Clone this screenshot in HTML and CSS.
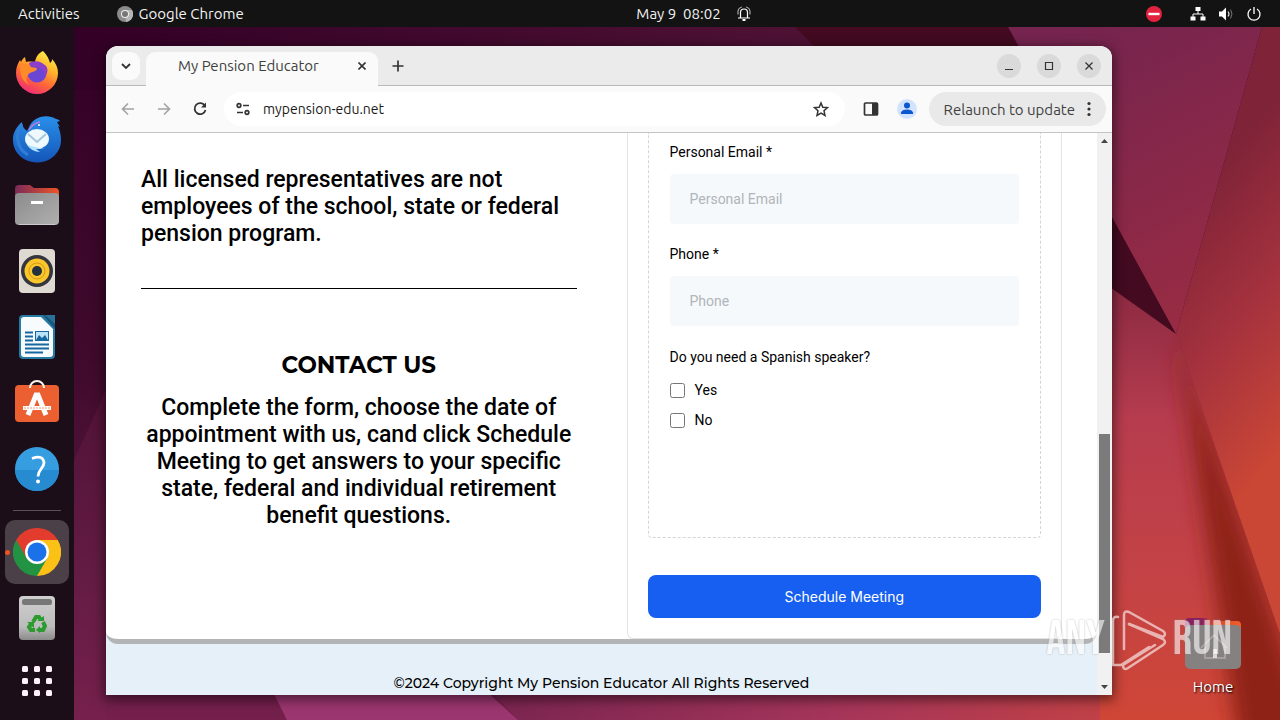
FILE: index.html
```html
<!DOCTYPE html>
<html lang="en">
<head>
<meta charset="utf-8">
<title>My Pension Educator</title>
<link rel="stylesheet" href="styles.css">
</head>
<body>
<div class="desktop">
  <svg class="wallpaper" viewBox="0 0 1280 720" preserveAspectRatio="none" aria-hidden="true">
    <defs>
      <linearGradient id="base" x1="0" y1="0" x2="0" y2="1"><stop offset="0" stop-color="#330026"/><stop offset=".5" stop-color="#3f0a2c"/><stop offset=".8" stop-color="#5c1a40"/><stop offset="1" stop-color="#75204c"/></linearGradient>
      <linearGradient id="top" x1="0" y1="0" x2="1" y2="0"><stop offset="0" stop-color="#330026"/><stop offset="1" stop-color="#4f1235"/></linearGradient>
      <linearGradient id="upper" gradientUnits="userSpaceOnUse" x1="1080" y1="27" x2="1240" y2="330"><stop offset="0" stop-color="#75244f"/><stop offset="1" stop-color="#9c2c42"/></linearGradient>
      <linearGradient id="right" gradientUnits="userSpaceOnUse" x1="1150" y1="240" x2="1330" y2="400"><stop offset="0" stop-color="#7f2338"/><stop offset=".5" stop-color="#a5323e"/><stop offset="1" stop-color="#cb4735"/></linearGradient>
      <linearGradient id="lower" gradientUnits="userSpaceOnUse" x1="1112" y1="290" x2="1112" y2="720"><stop offset="0" stop-color="#8c2a42"/><stop offset=".3" stop-color="#b63c4e"/><stop offset=".7" stop-color="#c54344"/><stop offset="1" stop-color="#cf4636"/></linearGradient>
      <linearGradient id="foot" gradientUnits="userSpaceOnUse" x1="490" y1="0" x2="1180" y2="0"><stop offset="0" stop-color="#7a2550"/><stop offset=".5" stop-color="#a5355a"/><stop offset="1" stop-color="#c84440"/></linearGradient>
      <filter id="soft" x="-50%" y="-20%" width="200%" height="140%"><feGaussianBlur stdDeviation="10"/></filter>
    </defs>
    <rect width="1280" height="720" fill="url(#base)"/>
    <path d="M74 27H820V90H74Z" fill="url(#top)"/>
    <path d="M74 460L106 390V720H74Z" fill="#7a2450" opacity=".25"/>
    <path d="M490 690L1100 278L1176 334L1290 664V720H518Z" fill="url(#foot)"/>
    <path d="M1100 278L1176 334L1290 664V720H1100Z" fill="url(#lower)"/>
    <path d="M1176 334L1310 720L1290 750H1240Z" fill="#8e2219" filter="url(#soft)"/>
    <path d="M795 27H1008L1176 334L1100 280L840 72Z" fill="#430a20"/>
    <path d="M1008 27H1262L1176 334Z" fill="url(#upper)"/>
    <path d="M1262 27H1280V634L1176 334Z" fill="url(#right)"/>
    <path d="M272 690H485L518 720H287Z" fill="#9c3670"/>
  </svg>

  <header class="topbar">
    <div class="topbar-left">
      <button class="bar-button">Activities</button>
      <button class="bar-button">
        <svg width="16" height="16" viewBox="0 0 16 16"><circle cx="8" cy="8" r="8" fill="#8b8b8b"/><path d="M8 4h7A8 8 0 0 1 9 16z" fill="#b5b5b5"/><circle cx="8" cy="8" r="4" fill="#eee"/><circle cx="8" cy="8" r="3" fill="#777"/></svg>
        Google Chrome
      </button>
    </div>
    <button class="bar-button clock">May 9&nbsp; 08:02
      <svg width="16" height="16" viewBox="0 0 16 16" fill="none" stroke="#fff" stroke-width="1.200"><path d="M4.500 12V6.500a3.500 3.500 0 0 1 7 0V12M2 12h12"/><path d="M2 8.500V5.500A5 5 0 0 1 6 1M14 8.500V5.500A5 5 0 0 0 10 1" stroke="#aaa"/><path d="M6.500 14h3" stroke-width="2"/></svg>
    </button>
    <div class="tray">
      <svg width="16" height="16" viewBox="0 0 16 16"><circle cx="8" cy="8" r="8" fill="#e2233f"/><path d="M2.500 8h11" stroke="#fff" stroke-width="2.400"/></svg>
      <svg class="tray-network" width="16" height="16" viewBox="0 0 16 16" fill="#fff"><path d="M5.500 1h5v4h-5zM.5 10.500h5v4h-5zM10.500 10.500h5v4h-5z"/><path d="M8 5v3M3 11V8h10v3" fill="none" stroke="#fff"/></svg>
      <svg width="16" height="16" viewBox="0 0 16 16"><path d="M1 5.500h3L8 1.500v13l-4-4H1z" fill="#fff"/><path d="M10 5.500q2 2.500 0 5" fill="none" stroke="#ddd" stroke-width="1.200"/><path d="M12.500 3.500q3 4.500 0 9" fill="none" stroke="#777"/></svg>
      <svg width="16" height="16" viewBox="0 0 16 16" fill="none" stroke="#fff" stroke-width="1.300"><path d="M5 3a6 6 0 1 0 6 0M8 1v7"/></svg>
    </div>
  </header>

  <nav class="dock" aria-label="Dock">
    <button class="dock-item" aria-label="Firefox"><svg width="48" height="48" viewBox="0 0 48 48">
      <defs><linearGradient id="ff" x1=".8" y1="0" x2=".3" y2="1"><stop offset="0" stop-color="#fff44f"/><stop offset=".35" stop-color="#ffb52a"/><stop offset=".65" stop-color="#ff6a35"/><stop offset="1" stop-color="#ef2a78"/></linearGradient></defs>
      <path d="M30 2c4 4 6 8 7 12 2-1 2-3 2-4 4 4 6 9 6 14a21 21 0 0 1-42 0c0-6 2-10 4-13l1 2c1-2 2-4 4-5l1 5c4-1 7 0 9 0 1-6 4-9 8-11z" fill="url(#ff)"/>
      <circle cx="24" cy="24" r="9.500" fill="#6b45d4"/><path d="M16 14c6-3 12-2 17 3 3 4 1 9-2 11 1-6-3-10-9-10-3 0-6-1-6-4z" fill="#8c3fc8"/><path d="M8 15c5-1 8 1 10 3 3 1 6 0 6 2-2 4-7 2-9 6-3 4-1 8 2 10C9 33 6 25 8 15z" fill="#ff8b28"/>
    </svg></button>
    <button class="dock-item" aria-label="Thunderbird"><svg width="48" height="48" viewBox="0 0 48 48">
      <defs><linearGradient id="tb" x1="0" y1="0" x2="0" y2="1"><stop offset="0" stop-color="#2a8fea"/><stop offset="1" stop-color="#1456b8"/></linearGradient></defs>
      <path d="M17 10C22 1 35-1 43 4c2 0 3 1 4 2l-3 1 3 5-2-1c2 5 3 9 3 14a24 22 0 0 1-48 1C-1 20 3 12 9 7c0 3 1 6 5 9z" fill="url(#tb)"/><path d="M9 9C2 18 3 33 15 40" fill="none" stroke="#2f7fd6" stroke-width="3"/><ellipse cx="24" cy="24" rx="12" ry="10" fill="#edf8ff"/><path d="M15 19l9 8 9-8" fill="none" stroke="#a7c6d5" stroke-width="2"/><path d="M14 30q5 7 13 7l-4-3h8z" fill="#b5e3ff"/><path d="M16 15q4-7 11-8" fill="none" stroke="#bd7be0" stroke-width="1.500"/><circle cx="26" cy="10" r="1" fill="#fff"/>
    </svg></button>
    <button class="dock-item" aria-label="Files"><svg width="48" height="48" viewBox="0 0 48 48">
      <defs><linearGradient id="tabg"><stop offset="0" stop-color="#7a2a58"/><stop offset="1" stop-color="#ee5526"/></linearGradient><linearGradient id="fold1" x1="0" y1="0" x2="1" y2="1"><stop offset="0" stop-color="#8b8b8b"/><stop offset="1" stop-color="#b0b0b0"/></linearGradient></defs>
      <path d="M2 8q0-4 4-4h11l4 3h21q4 0 4 4v12H2z" fill="url(#tabg)"/><rect x="2" y="12" width="44" height="32" rx="4" fill="url(#fold1)"/><path d="M6 43.500h36" stroke="#ccc"/><rect x="18" y="20" width="12" height="3" fill="#fff"/>
    </svg></button>
    <button class="dock-item" aria-label="Rhythmbox"><svg width="48" height="48" viewBox="0 0 48 48"><rect x="6" y="2" width="36" height="44" rx="4" fill="#dedad1"/><circle cx="24" cy="24" r="16" fill="#35353d"/><circle cx="24" cy="24" r="12.500" fill="#f9c62b"/><circle cx="24" cy="24" r="8" fill="none" stroke="#d59a16"/><circle cx="24" cy="24" r="5" fill="#23303d"/></svg></button>
    <button class="dock-item" aria-label="Writer"><svg width="48" height="48" viewBox="0 0 48 48"><path d="M10 2h32v40q0 4-4 4H10q-4 0-4-4V6q0-4 4-4z" fill="#267ba5"/><path d="M30 2h12v14z" fill="#1b557a"/><path d="M32 2h10v9z" fill="#2a7199"/><path d="M11 4h17l12 12v25q0 3-3 3H11q-3 0-3-3V7q0-3 3-3z" fill="#f7fbfd"/><path d="M12 19.500h8M12 23.500h8M12 27.500h8M12 31.500h24M12 35.500h24M12 39.500h18" stroke="#1668a0" stroke-width="2"/><rect x="22.500" y="18.500" width="13" height="9" fill="#b9e2f8" stroke="#1668a0"/><path d="M23 27l3-5 3 3 3-3 3 5z" fill="#1668a0"/></svg></button>
    <button class="dock-item" aria-label="Software"><svg width="48" height="48" viewBox="0 0 48 48"><rect x="2" y="6" width="44" height="37" rx="4" fill="#ec5f31"/><path d="M17 9a7 7 0 0 1 14 0" fill="none" stroke="#fff5ea" stroke-width="2"/><path d="M15 36l8-20h2l8 20" fill="none" stroke="#fff" stroke-width="5"/><path d="M10 29h28" stroke="#fff" stroke-width="4"/><path d="M11 29h26" stroke="#ef9b77" stroke-dasharray="2 1"/></svg></button>
    <button class="dock-item" aria-label="Help"><svg width="48" height="48" viewBox="0 0 48 48"><circle cx="24" cy="24" r="22" fill="#379de1"/><path d="M2 25h44a22 21 0 0 1-44 0z" fill="#268bd0"/><path d="M19 13.500q11-4 12 4c0 6-6 7-6 14" fill="none" stroke="#fff" stroke-width="2.800"/><circle cx="25" cy="36.500" r="2" fill="#fff"/></svg></button>
    <hr class="dock-divider">
    <button class="dock-item dock-active" aria-label="Google Chrome"><svg width="48" height="48" viewBox="0 0 48 48"><path d="M24 24L3.200 12A24 24 0 0 1 44.800 12z" fill="#e33b2e"/><path d="M24 24L44.800 12A24 24 0 0 1 24 48z" fill="#fbc116"/><path d="M24 24L3.200 12A24 24 0 0 0 24 48z" fill="#229342"/><path d="M24 12h20.800L33.500 30z" fill="#fbc116"/><path d="M34.400 30L24 48l-9-18z" fill="#229342"/><path d="M3.200 12L13.600 30 24 12z" fill="#e33b2e"/><circle cx="24" cy="24" r="12" fill="#fff"/><circle cx="24" cy="24" r="9.500" fill="#1b71e8"/></svg></button>
    <button class="dock-item" aria-label="Trash"><svg width="48" height="48" viewBox="0 0 48 48"><defs><linearGradient id="bin" x1="0" y1="0" x2="0" y2="1"><stop offset="0" stop-color="#cfcfcf"/><stop offset=".7" stop-color="#bcbcbc"/><stop offset="1" stop-color="#8a8a8a"/></linearGradient></defs><rect x="6" y="2" width="36" height="44" rx="4" fill="url(#bin)"/><rect x="9" y="5" width="30" height="6" rx="2.500" fill="#777"/><g fill="none" stroke="#2c9b2f" stroke-width="4"><path d="M20 28l3-5h3l2 3"/><path d="M30 28l2 4-2 4h-4"/><path d="M22 36h-4l-2-3 2-3"/></g><path d="M24 27h7v-5zM27 32v7l-4-3zM14 28h7v6z" fill="#2c9b2f"/></svg></button>
    <button class="dock-item apps" aria-label="Show Applications"><svg width="32" height="32" viewBox="0 0 32 32" fill="#fff0fa"><rect x="1" y="1" width="6" height="6" rx="1.500"/><rect x="13" y="1" width="6" height="6" rx="1.500"/><rect x="25" y="1" width="6" height="6" rx="1.500"/><rect x="1" y="13" width="6" height="6" rx="1.500"/><rect x="13" y="13" width="6" height="6" rx="1.500"/><rect x="25" y="13" width="6" height="6" rx="1.500"/><rect x="1" y="25" width="6" height="6" rx="1.500"/><rect x="13" y="25" width="6" height="6" rx="1.500"/><rect x="25" y="25" width="6" height="6" rx="1.500"/></svg></button>
  </nav>

  <main class="workspace">
    <button class="desktop-icon">
      <svg width="56" height="56" viewBox="0 0 56 56"><defs><linearGradient id="home"><stop offset=".3" stop-color="#87205d"/><stop offset=".5" stop-color="#d7432b"/><stop offset="1" stop-color="#f06028"/></linearGradient></defs><path d="M0 8q0-5 4-5h17l4 3h27q4 0 4 4v12H0z" fill="url(#home)"/><rect y="10" width="56" height="44" rx="5" fill="#858181"/><path d="M16 33l13-13 13 13M20 31v12h20V31" fill="none" stroke="#b5a9a7" stroke-width="1.500"/><path d="M28 34h4v9h-4z" fill="#ddd"/></svg>
      <span>Home</span>
    </button>

    <section class="window">
      <div class="tabstrip">
        <button class="tab-search" aria-label="Search tabs"><svg width="10" height="10" viewBox="0 0 10 10" fill="none" stroke="#333" stroke-width="1.800"><path d="M1 3l4 4 4-4"/></svg></button>
        <div class="tab"><span class="tab-title">My Pension Educator</span><button class="icon-button" aria-label="Close tab"><svg width="8" height="8" viewBox="0 0 8 8" stroke="#333" stroke-width="1.600"><path d="M.5.5l7 7M7.500.5l-7 7"/></svg></button></div>
        <button class="icon-button new-tab" aria-label="New tab"><svg width="12" height="12" viewBox="0 0 12 12" stroke="#333" stroke-width="1.700"><path d="M6 .5v11M.5 6h11"/></svg></button>
        <div class="window-controls">
          <button aria-label="Minimize"><svg width="10" height="10" viewBox="0 0 10 10" stroke="#333" fill="none"><path d="M1 8.500h8"/></svg></button>
          <button aria-label="Maximize"><svg width="10" height="10" viewBox="0 0 10 10" stroke="#333" fill="none" stroke-width="1.200"><path d="M1.500 1.500h7v7h-7z"/></svg></button>
          <button aria-label="Close"><svg width="10" height="10" viewBox="0 0 10 10" stroke="#333" fill="none" stroke-width="1.300"><path d="M1.500 1.500l7 7M8.500 1.500l-7 7"/></svg></button>
        </div>
      </div>
      <div class="toolbar">
        <button class="icon-button nav-button" aria-label="Back"><svg width="16" height="16" viewBox="0 0 16 16" fill="none" stroke="#a3a3a3" stroke-width="1.600"><path d="M14 8H3M8 2.500L2.500 8 8 13.500"/></svg></button>
        <button class="icon-button nav-button" aria-label="Forward"><svg width="16" height="16" viewBox="0 0 16 16" fill="none" stroke="#a3a3a3" stroke-width="1.600"><path d="M2 8h11M8 2.500L13.500 8 8 13.500"/></svg></button>
        <button class="icon-button nav-button" aria-label="Reload"><svg width="16" height="16" viewBox="0 0 16 16" fill="none" stroke="#333" stroke-width="1.800"><path d="M13 5A5.500 5.500 0 1 0 13.500 9"/><path d="M14 1.500v5H9z" fill="#333" stroke="none"/></svg></button>
        <div class="address">
          <svg width="16" height="16" viewBox="0 0 16 16" fill="none" stroke="#333" stroke-width="1.700"><circle cx="4" cy="4.500" r="1.800"/><path d="M8 4.500h6M2 11.500h6"/><circle cx="12" cy="11.500" r="1.800"/></svg>
          <input class="url" aria-label="Address" value="mypension-edu.net">
          <button class="icon-button" aria-label="Bookmark"><svg width="18" height="18" viewBox="0 0 18 18" fill="none" stroke="#333" stroke-width="1.500"><path d="M9 3l1.800 4.200 4.700.4-3.500 3.200 1 4.600L9 13l-4 2.400 1-4.600-3.500-3.200 4.700-.4z"/></svg></button>
        </div>
        <button class="icon-button side-panel" aria-label="Side panel"><svg width="16" height="16" viewBox="0 0 16 16"><rect x="1.500" y="2" width="13" height="12" rx="1" fill="none" stroke="#333" stroke-width="1.700"/><path d="M9 2h6v12H9z" fill="#333"/></svg></button>
        <button class="icon-button" aria-label="Profile"><svg width="20" height="20" viewBox="0 0 20 20"><circle cx="10" cy="10" r="10" fill="#d3e3fd"/><circle cx="10" cy="6.500" r="3" fill="#0b57d0"/><path d="M4 15v-1.500Q5 10.500 10 10.500t6 3V15z" fill="#0b57d0"/></svg></button>
        <button class="relaunch">Relaunch to update <svg width="4" height="16" viewBox="0 0 4 16" fill="#333"><circle cx="2" cy="2.500" r="1.600"/><circle cx="2" cy="8" r="1.600"/><circle cx="2" cy="13.500" r="1.600"/></svg></button>
      </div>
      <div class="viewport">
        <div class="page">
          <div class="panel">
            <div class="info">
              <p class="lead">All licensed representatives are not employees of the school, state or federal pension program.</p>
              <hr class="rule">
              <h2 class="contact-title">CONTACT US</h2>
              <p class="lead contact-text">Complete the form, choose the date of appointment with us, cand click Schedule Meeting to get answers to your specific state, federal and individual retirement benefit questions.</p>
            </div>
            <form class="card">
              <div class="fields">
                <label class="label" for="email">Personal Email *</label>
                <input class="field" id="email" type="email" placeholder="Personal Email">
                <label class="label" for="phone">Phone *</label>
                <input class="field" id="phone" type="tel" placeholder="Phone">
                <fieldset class="choices">
                  <legend class="label">Do you need a Spanish speaker?</legend>
                  <label class="choice"><input class="check" type="checkbox">Yes</label>
                  <label class="choice"><input class="check" type="checkbox">No</label>
                </fieldset>
              </div>
              <button class="submit" type="button">Schedule Meeting</button>
            </form>
          </div>
          <footer class="footer">©2024 Copyright My Pension Educator All Rights Reserved</footer>
        </div>
        <div class="scrollbar" aria-hidden="true">
          <svg width="7" height="4" viewBox="0 0 7 4"><path d="M0 4L3.500 0 7 4z" fill="#444"/></svg>
          <div class="track"><div class="thumb"></div></div>
          <svg width="7" height="4" viewBox="0 0 7 4"><path d="M0 0h7L3.500 4z" fill="#444"/></svg>
        </div>
      </div>
    </section>

    <div class="watermark">
      <span>ANY</span>
      <svg width="56" height="64" viewBox="0 0 56 64" fill="none" stroke="#fff" stroke-width="2.500" stroke-linejoin="round" stroke-linecap="round"><path d="M13 41V7q0-5 5-3l34 19q4 3 0 6L18 16"/><path d="M18 16l34 15q4 3 0 6L17 60q-5 3-5-3l32-20"/><path d="M7 9Q2 8 2 13v44h8l28-18"/></svg>
      <span>RUN</span>
    </div>
  </main>
</div>
</body>
</html>
```
FILE: styles.css
```css
* { box-sizing: border-box; }
body { margin: 0; font-family: Ubuntu, "Open Sans", "Noto Sans", sans-serif; }
button { border: 0; padding: 0; background: none; font: inherit; color: inherit; }
svg { display: block; flex: none; }

.desktop {
  position: relative;
  display: grid;
  grid-template: 27px minmax(0, 1fr) / 74px minmax(0, 1fr);
  height: 100vh;
  overflow: hidden;
}
.wallpaper { position: absolute; inset: 0; width: 100%; height: 100%; }

.topbar {
  position: relative;
  grid-column: 1 / -1;
  display: grid;
  grid-template-columns: 1fr auto 1fr;
  align-items: center;
  padding: 0 18px;
  background: #131313;
  color: #f2f2f2;
  font-size: 15px;
}
.topbar-left { display: flex; gap: 37px; }
.bar-button { display: flex; align-items: center; gap: 6px; }
.clock { gap: 15px; margin-left: 108px; }
.tray { display: flex; align-items: center; justify-content: flex-end; gap: 12px; }
.tray-network { margin-left: 16px; }

.dock {
  position: relative;
  display: flex;
  flex-direction: column;
  align-items: center;
  padding-top: 13px;
  background: #1b0e18;
}
.dock-item { flex: none; display: grid; place-items: center; width: 64px; height: 66px; }
.dock-divider { width: 48px; margin: 8px 0 9px; border: 0; border-top: 1px solid #5b5059; }
.dock-active { position: relative; height: 64px; margin-bottom: 1px; border-radius: 10px; background: #4b4048; }
.dock-active::before {
  content: "";
  position: absolute;
  left: 0;
  width: 5px;
  height: 5px;
  border-radius: 50%;
  background: #e95420;
}
.apps { height: 60px; }

.workspace { position: relative; }
.desktop-icon {
  position: absolute;
  right: 39px;
  bottom: 23px;
  display: grid;
  justify-items: center;
  gap: 6px;
  color: #fff;
  font-size: 15px;
  line-height: 20px;
  text-shadow: 1px 1px 2px #000;
}

.window {
  position: absolute;
  inset: 19px 168px 25px 32px;
  display: flex;
  flex-direction: column;
  border-radius: 12px 12px 0 0;
  overflow: hidden;
  box-shadow: 0 3px 12px 2px rgba(0, 0, 0, .5);
  background: #fff;
}
.icon-button { display: grid; place-items: center; flex: none; }
.tabstrip {
  display: flex;
  align-items: center;
  height: 40px;
  padding: 0 11px 0 6px;
  background: #ebebeb;
  border-bottom: 1px solid #b9b9b9;
  color: #3f3f3f;
  font-size: 15px;
}
.tab-search { display: grid; place-items: center; width: 28px; height: 28px; border-radius: 9px; background: #fafafa; }
.tab {
  display: flex;
  align-items: center;
  align-self: flex-end;
  width: 232px;
  height: 34px;
  margin: 0 0 -1px 6px;
  padding: 0 12px 7px 32px;
  border-radius: 9px 9px 0 0;
  background: #fafafa;
}
.tab-title { flex: 1; }
.new-tab { margin-left: 14px; }
.window-controls { display: flex; gap: 16px; margin-left: auto; }
.window-controls button { display: grid; place-items: center; width: 24px; height: 24px; border-radius: 50%; background: #dadada; }
.toolbar {
  display: flex;
  align-items: center;
  gap: 16px;
  height: 47px;
  padding: 0 6px 0 14px;
  background: #fafafa;
  border-bottom: 1px solid #c4c4c4;
}
.nav-button { width: 16px; margin-right: 4px; }
.address {
  flex: 1;
  display: flex;
  align-items: center;
  gap: 12px;
  min-width: 0;
  height: 34px;
  padding: 0 15px 0 11px;
  border-radius: 17px;
  background: #fff;
  margin-left: -4px;
}
.url { flex: 1; min-width: 0; border: 0; padding: 0; background: none; color: #1a1a1a; font: 14px Ubuntu, "Open Sans", sans-serif; }
.side-panel { margin: 0 2px; }
.relaunch {
  display: flex;
  align-items: center;
  gap: 12px;
  height: 34px;
  margin-left: -4px;
  padding: 0 15px;
  border-radius: 17px;
  background: #e9e9e9;
  color: #3f3f3f;
  font-size: 15px;
}

.viewport { flex: 1; display: flex; min-height: 0; }
.page { flex: 1; display: flex; flex-direction: column; background: #e6f0f9; font-family: Roboto, sans-serif; color: #000; overflow: hidden; }
.panel {
  display: grid;
  grid-template-columns: minmax(0, 1fr) minmax(0, 1fr);
  gap: 50px;
  padding: 0 35px;
  border-bottom: 5px solid #b3b4b5;
  border-radius: 0 0 12px 12px;
  background: #fff;
}
.info { padding-top: 33px; }
.lead { margin: 0; font-size: 23px; font-weight: 500; line-height: 27px; }
.rule { margin: 41px 0 62px; border: 0; border-top: 1px solid #000; }
.contact-title { margin: 0 0 15px; font: 700 23px/28px Montserrat, Inter, sans-serif; text-align: center; }
.contact-text { text-align: center; }
.card {
  display: flex;
  flex-direction: column;
  padding: 0 20px 20px;
  border: 1px solid #e4e4e4;
  border-top: 0;
  border-radius: 0 0 6px 6px;
}
.fields {
  padding: 9px 21px 102px;
  border: 1px dashed #d5d5d5;
  border-top: 0;
  border-radius: 0 0 4px 4px;
  font-size: 14px;
}
.label { display: block; padding: 0; line-height: 20px; }
.field {
  display: block;
  width: 100%;
  height: 50px;
  margin: 12px 0 20px;
  padding: 0 20px;
  border: 0;
  border-radius: 4px;
  background: #f5f9fc;
  font: 14px Roboto, sans-serif;
}
.field::placeholder { color: #b0b5b9; opacity: 1; }
.choices { margin: 21px 0 0; padding: 8px 0 0; border: 0; }
.choice { display: flex; align-items: center; gap: 10px; height: 30px; }
.check { width: 15px; height: 15px; margin: 0; }
.submit {
  height: 43px;
  margin-top: 37px;
  border-radius: 8px;
  background: #175ff0;
  color: #fff;
  font: 400 14px Inter, sans-serif;
}
.footer { padding: 29px 0 0; text-align: center; font: 500 14px/20px Montserrat, Inter, sans-serif; }

.scrollbar { display: flex; flex-direction: column; align-items: center; width: 15px; padding: 6px 0; gap: 4px; background: #f1f1f1; }
.track { flex: 1; width: 11px; }
.thumb { height: 41%; margin-top: 287px; background: #7b7b7b; }

.watermark {
  position: absolute;
  right: 48px;
  bottom: 48px;
  display: flex;
  align-items: center;
  gap: 6px;
  color: #fff;
  opacity: .6;
  font: 300 48px/64px "Bebas Neue", Oswald, "Barlow Condensed", "Ubuntu Condensed", "Liberation Sans Narrow", sans-serif;
  text-shadow: 0 0 2px #888;
  pointer-events: none;
}
```
